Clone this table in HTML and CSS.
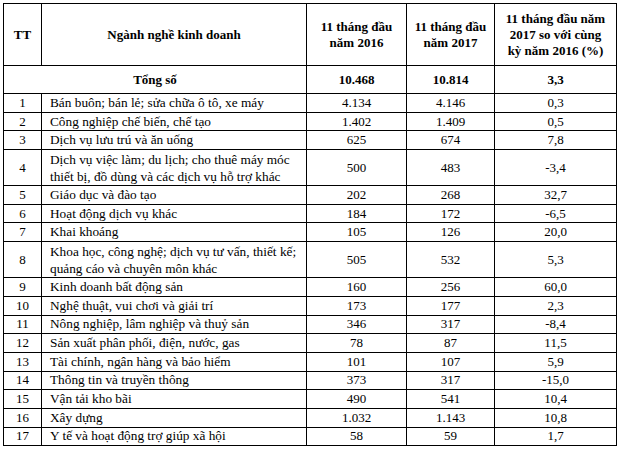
FILE: index.html
```html
<!DOCTYPE html>
<html lang="vi">
<head>
<meta charset="utf-8">
<title>Ngành nghề kinh doanh</title>
<link rel="stylesheet" href="styles.css">
</head>
<body>
<table class="tbl">
  <colgroup>
    <col class="c-tt"><col class="c-name"><col class="c-y16"><col class="c-y17"><col class="c-pct">
  </colgroup>
  <thead>
    <tr class="head">
      <th>TT</th>
      <th>Ngành nghề kinh doanh</th>
      <th>11 tháng đầu<br>năm 2016</th>
      <th>11 tháng đầu<br>năm 2017</th>
      <th>11 tháng đầu năm<br>2017 so với cùng<br>kỳ năm 2016 (%)</th>
    </tr>
  </thead>
  <tbody>
    <tr class="total">
      <td colspan="2" class="ctr">Tổng số</td>
      <td class="ctr">10.468</td>
      <td class="ctr">10.814</td>
      <td class="ctr">3,3</td>
    </tr>
    <tr><td class="ctr">1</td><td class="name">Bán buôn; bán lẻ; sửa chữa ô tô, xe máy</td><td class="ctr">4.134</td><td class="ctr">4.146</td><td class="ctr">0,3</td></tr>
    <tr><td class="ctr">2</td><td class="name">Công nghiệp chế biến, chế tạo</td><td class="ctr">1.402</td><td class="ctr">1.409</td><td class="ctr">0,5</td></tr>
    <tr><td class="ctr">3</td><td class="name">Dịch vụ lưu trú và ăn uống</td><td class="ctr">625</td><td class="ctr">674</td><td class="ctr">7,8</td></tr>
    <tr class="dbl"><td class="ctr">4</td><td class="name">Dịch vụ việc làm; du lịch; cho thuê máy móc<br>thiết bị, đồ dùng và các dịch vụ hỗ trợ khác</td><td class="ctr">500</td><td class="ctr">483</td><td class="ctr">-3,4</td></tr>
    <tr><td class="ctr">5</td><td class="name">Giáo dục và đào tạo</td><td class="ctr">202</td><td class="ctr">268</td><td class="ctr">32,7</td></tr>
    <tr><td class="ctr">6</td><td class="name">Hoạt động dịch vụ khác</td><td class="ctr">184</td><td class="ctr">172</td><td class="ctr">-6,5</td></tr>
    <tr><td class="ctr">7</td><td class="name">Khai khoáng</td><td class="ctr">105</td><td class="ctr">126</td><td class="ctr">20,0</td></tr>
    <tr class="dbl"><td class="ctr">8</td><td class="name">Khoa học, công nghệ; dịch vụ tư vấn, thiết kế;<br>quảng cáo và chuyên môn khác</td><td class="ctr">505</td><td class="ctr">532</td><td class="ctr">5,3</td></tr>
    <tr><td class="ctr">9</td><td class="name">Kinh doanh bất động sản</td><td class="ctr">160</td><td class="ctr">256</td><td class="ctr">60,0</td></tr>
    <tr><td class="ctr">10</td><td class="name">Nghệ thuật, vui chơi và giải trí</td><td class="ctr">173</td><td class="ctr">177</td><td class="ctr">2,3</td></tr>
    <tr><td class="ctr">11</td><td class="name">Nông nghiệp, lâm nghiệp và thuỷ sản</td><td class="ctr">346</td><td class="ctr">317</td><td class="ctr">-8,4</td></tr>
    <tr><td class="ctr">12</td><td class="name">Sản xuất phân phối, điện, nước, gas</td><td class="ctr">78</td><td class="ctr">87</td><td class="ctr">11,5</td></tr>
    <tr><td class="ctr">13</td><td class="name">Tài chính, ngân hàng và bảo hiểm</td><td class="ctr">101</td><td class="ctr">107</td><td class="ctr">5,9</td></tr>
    <tr><td class="ctr">14</td><td class="name">Thông tin và truyền thông</td><td class="ctr">373</td><td class="ctr">317</td><td class="ctr">-15,0</td></tr>
    <tr><td class="ctr">15</td><td class="name">Vận tải kho bãi</td><td class="ctr">490</td><td class="ctr">541</td><td class="ctr">10,4</td></tr>
    <tr><td class="ctr">16</td><td class="name">Xây dựng</td><td class="ctr">1.032</td><td class="ctr">1.143</td><td class="ctr">10,8</td></tr>
    <tr><td class="ctr">17</td><td class="name">Y tế và hoạt động trợ giúp xã hội</td><td class="ctr">58</td><td class="ctr">59</td><td class="ctr">1,7</td></tr>
  </tbody>
</table>
</body>
</html>
```

FILE: styles.css
```css
html, body {
  margin: 0;
  padding: 0;
  background: #fff;
}
body {
  padding: 3px 0 0 3px;
  font-family: "Liberation Serif", "Times New Roman", serif;
  font-size: 13px;
  color: #000;
}
.tbl {
  border-collapse: collapse;
  table-layout: fixed;
  width: 613px;
}
.c-tt { width: 38px; }
.c-name { width: 265px; }
.c-y16 { width: 100px; }
.c-y17 { width: 88px; }
.c-pct { width: 122px; }
.tbl th, .tbl td {
  border: 1px solid #000;
  padding: 0;
  vertical-align: middle;
  line-height: 16px;
}
.tbl td {
  height: 17.7px;
}
.head th {
  height: 61px;
  font-weight: bold;
  text-align: center;
}
.total td {
  height: 27px;
  font-weight: bold;
}
.tbl tr.dbl td {
  height: 35px;
  line-height: 17px;
}
.ctr { text-align: center; }
.name {
  text-align: left;
  padding-left: 8px !important;
  white-space: nowrap;
  font-size: 13.3px;
}
```
